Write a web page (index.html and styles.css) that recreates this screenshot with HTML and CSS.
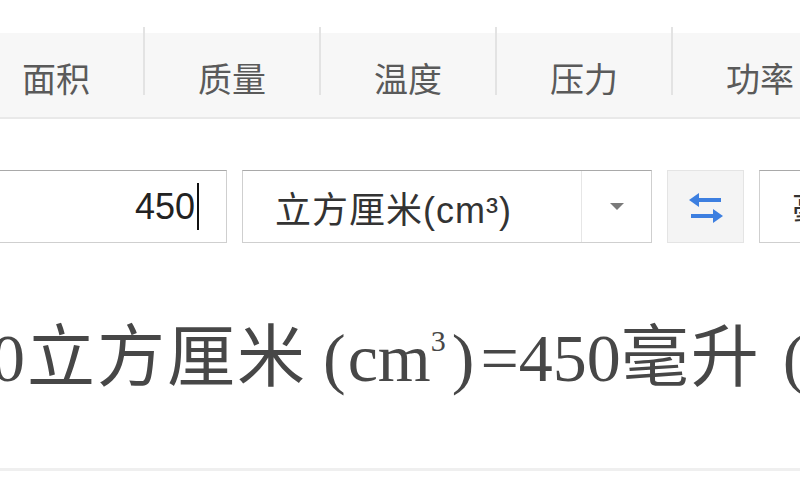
FILE: index.html
```html
<!DOCTYPE html>
<html lang="zh-CN">
<head>
<meta charset="utf-8">
<title>单位换算</title>
<link rel="stylesheet" href="styles.css">
</head>
<body>
<div class="page">
  <nav class="tabbar">
    <div class="tab">面积</div>
    <div class="tab">质量</div>
    <div class="tab">温度</div>
    <div class="tab">压力</div>
    <div class="tab">功率</div>
  </nav>

  <div class="controls">
    <div class="input"><span class="value">450</span><span class="caret"></span></div>
    <div class="select">
      <span class="select-text">立方厘米(cm³)</span>
      <span class="select-arrow"><span class="tri"></span></span>
    </div>
    <button class="swap" type="button" aria-label="交换">
      <svg width="40" height="34" viewBox="0 0 40 34">
        <line x1="10" y1="10" x2="35" y2="10" stroke="#3d7fe0" stroke-width="4"/>
        <polygon points="3,10 13,3 13,17" fill="#3d7fe0"/>
        <line x1="5" y1="26" x2="30" y2="26" stroke="#3d7fe0" stroke-width="4"/>
        <polygon points="37,26 27,19 27,33" fill="#3d7fe0"/>
      </svg>
    </button>
    <div class="select select-to">
      <span class="select-text">毫升(ml)</span>
    </div>
  </div>

  <p class="result"><span class="cjk">450立方厘米</span><span class="paren paren-open">(</span>cm<sup class="sup">3</sup><span class="paren">)</span>=450<span class="cjk">毫升</span><span class="paren paren-open2">(</span>ml<span class="paren">)</span></p>

  <div class="rule"></div>
</div>
</body>
</html>
```
FILE: styles.css
```css
html, body {
  margin: 0;
  padding: 0;
  background: #ffffff;
}
body {
  width: 800px;
  height: 500px;
  overflow: hidden;
  font-family: "Liberation Sans", "Noto Sans CJK SC", sans-serif;
}
.page {
  width: 800px;
  overflow: hidden;
}
.tabbar {
  display: flex;
  margin-top: 27px;
  margin-left: -31px;
  height: 90px;
  background: linear-gradient(#ffffff 6px, #f7f7f7 6px);
  border-bottom: 2px solid #e9e9e9;
}
.tab {
  flex: 0 0 174px;
  height: 68px;
  border-right: 2px solid #e3e3e3;
  display: flex;
  align-items: flex-end;
  justify-content: center;
  font-family: "Noto Sans CJK SC", sans-serif;
  font-size: 34px;
  color: #5a5a5a;
  line-height: 1;
}
.controls {
  display: flex;
  margin-top: 51px;
  height: 73px;
  gap: 15px;
}
.input {
  flex: 0 0 auto;
  width: 228px;
  margin-left: -1px;
  box-sizing: border-box;
  border: 1px solid #cfcfcf;
  border-top-color: #a9a9a9;
  display: flex;
  align-items: center;
  justify-content: flex-end;
  padding-right: 27px;
  font-size: 36px;
  color: #222222;
}
.caret {
  width: 2px;
  height: 47px;
  background: #111111;
  margin-left: 2px;
}
.select {
  flex: 0 0 auto;
  width: 410px;
  box-sizing: border-box;
  border: 1px solid #cfcfcf;
  border-top-color: #a9a9a9;
  display: flex;
  align-items: center;
}
.select-text {
  flex: 1;
  padding-left: 32px;
  font-family: "Liberation Sans", "Noto Sans CJK SC", sans-serif;
  font-size: 36px;
  letter-spacing: 1px;
  color: #333333;
  white-space: nowrap;
  overflow: hidden;
}
.select-arrow {
  flex: 0 0 69px;
  height: 100%;
  border-left: 1px solid #e6e6e6;
  display: flex;
  align-items: center;
  justify-content: center;
}
.tri {
  width: 0;
  height: 0;
  border-left: 7px solid transparent;
  border-right: 7px solid transparent;
  border-top: 7px solid #7a7a7a;
}
.swap {
  flex: 0 0 77px;
  height: 73px;
  box-sizing: border-box;
  border: 1px solid #e4e4e4;
  background: #f4f4f4;
  padding: 0;
  margin: 0;
  display: flex;
  align-items: center;
  justify-content: center;
}
.select-to {
  width: 300px;
}
.result {
  margin: 75px 0 0 -81px;
  font-family: "Liberation Serif", "Noto Sans CJK SC", serif;
  font-size: 68px;
  line-height: 80px;
  color: #474747;
  white-space: nowrap;
}
.result .cjk {
  letter-spacing: 2px;
}
.paren {
  font-family: "Liberation Serif", serif;
  padding: 0 6px;
}
.paren-open {
  padding: 0 2px 0 16px;
}
.paren-open2 {
  padding: 0 2px 0 22px;
}
.sup {
  font-size: 30px;
  vertical-align: 0;
  position: relative;
  top: -30px;
}
.rule {
  margin-top: 57px;
  height: 3px;
  background: #efefef;
}
```
